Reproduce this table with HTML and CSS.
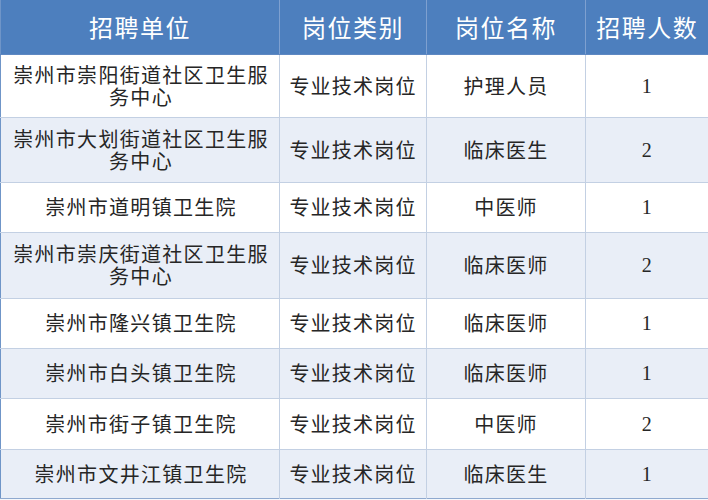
FILE: index.html
```html
<!DOCTYPE html>
<html lang="zh">
<head>
<meta charset="utf-8">
<link rel="stylesheet" href="styles.css">
</head>
<body>
<table class="jobs">
  <colgroup>
    <col class="c1"><col class="c2"><col class="c3"><col class="c4">
  </colgroup>
  <thead>
    <tr class="head"><th>招聘单位</th><th>岗位类别</th><th>岗位名称</th><th>招聘人数</th></tr>
  </thead>
  <tbody>
    <tr class="tall odd"><td class="unit">崇州市崇阳街道社区卫生服务中心</td><td>专业技术岗位</td><td>护理人员</td><td class="num">1</td></tr>
    <tr class="tall2 even"><td class="unit">崇州市大划街道社区卫生服务中心</td><td>专业技术岗位</td><td>临床医生</td><td class="num">2</td></tr>
    <tr class="row odd"><td class="unit">崇州市道明镇卫生院</td><td>专业技术岗位</td><td>中医师</td><td class="num">1</td></tr>
    <tr class="tall3 even"><td class="unit">崇州市崇庆街道社区卫生服务中心</td><td>专业技术岗位</td><td>临床医师</td><td class="num">2</td></tr>
    <tr class="row odd"><td class="unit">崇州市隆兴镇卫生院</td><td>专业技术岗位</td><td>临床医师</td><td class="num">1</td></tr>
    <tr class="row even"><td class="unit">崇州市白头镇卫生院</td><td>专业技术岗位</td><td>临床医师</td><td class="num">1</td></tr>
    <tr class="row2 odd"><td class="unit">崇州市街子镇卫生院</td><td>专业技术岗位</td><td>中医师</td><td class="num">2</td></tr>
    <tr class="row3 even"><td class="unit">崇州市文井江镇卫生院</td><td>专业技术岗位</td><td>临床医生</td><td class="num">1</td></tr>
  </tbody>
</table>
</body>
</html>
```

FILE: styles.css
```css
html, body {
  margin: 0;
  padding: 0;
  background: #f4f7fb;
}
.jobs {
  width: 708px;
  border-collapse: collapse;
  table-layout: fixed;
  font-family: "Noto Sans CJK SC", "Noto Sans", sans-serif;
  color: #262626;
  border-left: 1px solid #6f95c8;
  border-bottom: 1px solid #8fa9cf;
}
.c1 { width: 279px; }
.c2 { width: 147px; }
.c3 { width: 159px; }
.c4 { width: 123px; }
.head {
  height: 54px;
  background: #4d7fbe;
}
.head th {
  color: #ffffff;
  font-weight: 400;
  font-size: 24px;
  letter-spacing: 1.5px;
  text-align: center;
  padding: 0;
  border-left: 1px solid #7ea0d0;
  border-bottom: 1px solid #5e88c2;
}
.head th:first-child { border-left: none; }
td {
  text-align: center;
  font-size: 20px;
  letter-spacing: 1.2px;
  line-height: 22px;
  padding: 0 2px;
  white-space: nowrap;
  border-left: 1px solid #c3d0e3;
  border-top: 1px solid #c3d0e3;
}
td:first-child { border-left: none; }
.unit {
  padding: 0 8px 0 10px;
  white-space: normal;
  letter-spacing: 1.3px;
}
.num {
  font-family: "Liberation Serif", "Times New Roman", serif;
  font-size: 20px;
}
.odd { background: #ffffff; }
.even { background: #e9eef7; }
.tall { height: 63px; }
.tall2 { height: 65px; }
.tall3 { height: 66px; }
.row { height: 50px; }
.row2 { height: 51px; }
.row3 { height: 49px; }
```
